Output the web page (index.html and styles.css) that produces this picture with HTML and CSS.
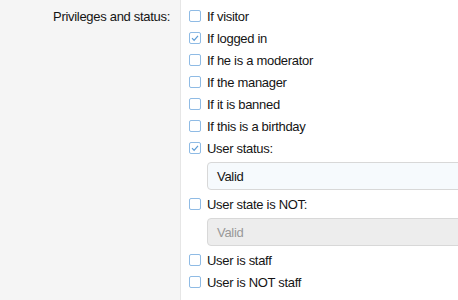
FILE: index.html
```html
<!DOCTYPE html>
<html>
<head>
<meta charset="utf-8">
<link rel="stylesheet" href="styles.css">
</head>
<body>
<div class="form-row">
  <div class="label-col"><span class="label">Privileges and status:</span></div>
  <div class="field-col">
    <div class="check"><span class="box"></span><span class="text">If visitor</span></div>
    <div class="check"><span class="box checked"><svg viewBox="0 0 12 12" width="12" height="12"><path d="M3 6.2 L5.1 8.3 L9 3.8" fill="none" stroke="#5b9bd5" stroke-width="1.2"/></svg></span><span class="text">If logged in</span></div>
    <div class="check"><span class="box"></span><span class="text">If he is a moderator</span></div>
    <div class="check"><span class="box"></span><span class="text">If the manager</span></div>
    <div class="check"><span class="box"></span><span class="text">If it is banned</span></div>
    <div class="check"><span class="box"></span><span class="text">If this is a birthday</span></div>
    <div class="check"><span class="box checked"><svg viewBox="0 0 12 12" width="12" height="12"><path d="M3 6.2 L5.1 8.3 L9 3.8" fill="none" stroke="#5b9bd5" stroke-width="1.2"/></svg></span><span class="text">User status:</span></div>
    <div class="select">Valid</div>
    <div class="check"><span class="box"></span><span class="text">User state is NOT:</span></div>
    <div class="select disabled">Valid</div>
    <div class="check"><span class="box"></span><span class="text">User is staff</span></div>
    <div class="check"><span class="box"></span><span class="text">User is NOT staff</span></div>
  </div>
</div>
</body>
</html>
```
FILE: styles.css
```css
html, body {
  margin: 0;
  padding: 0;
  background: #ffffff;
  font-family: "Liberation Sans", Arial, Helvetica, sans-serif;
  font-size: 13px;
  letter-spacing: -0.3px;
  color: #141414;
  overflow: hidden;
}
.form-row {
  display: flex;
  width: 458px;
  height: 300px;
}
.label-col {
  flex: none;
  background: #f5f5f5;
  border-right: 1px solid #e6e6e6;
  box-sizing: border-box;
  width: 181px;
  display: flex;
  justify-content: flex-end;
  padding: 9px 10px 0 0;
}
.label {
  line-height: 15px;
}
.field-col {
  flex: 1;
  padding: 5px 0 0 8px;
  display: flex;
  flex-direction: column;
  min-width: 0;
}
.check {
  display: flex;
  align-items: center;
  height: 22px;
}
.box {
  width: 12px;
  height: 12px;
  box-sizing: border-box;
  border: 1.5px solid #8fbbe5;
  border-radius: 2px;
  background: #fff;
  flex: none;
  margin-right: 6px;
  position: relative;
}
.box svg {
  position: absolute;
  left: -1.5px;
  top: -1.5px;
}
.select {
  margin: 3px -20px 3px 18px;
  height: 28px;
  box-sizing: border-box;
  border: 1px solid #d8d8d8;
  border-radius: 4px;
  background: #f6fafd;
  padding: 0 9px;
  display: flex;
  align-items: center;
}
.select.disabled {
  background: #ededed;
  color: #999999;
}
```
